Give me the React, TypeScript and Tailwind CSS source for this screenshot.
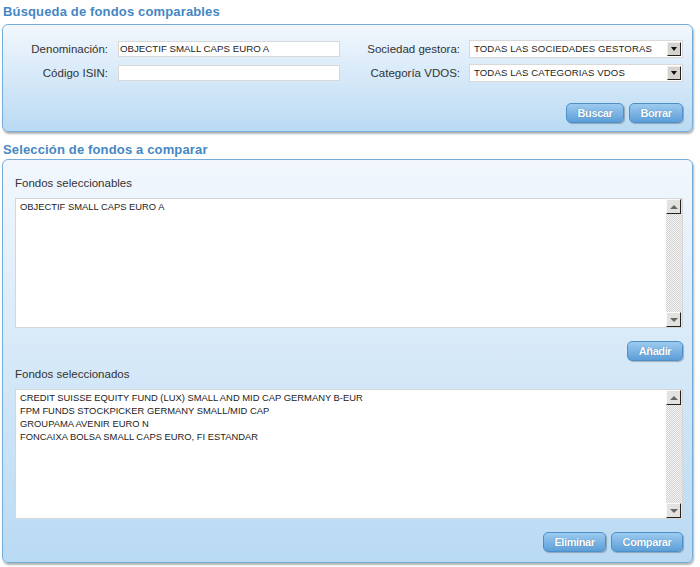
import React from "react";

const font = { fontFamily: '"Liberation Sans", Arial, sans-serif' };

const Btn = ({ label, w }: { label: string; w: string }) => (
  <button
    className={`${w} h-[20px] rounded-[5px] border border-[#4f8fc8] bg-gradient-to-b from-[#9ccbef] to-[#5c9ed8] text-[11px] leading-[18px] font-bold tracking-[-0.4px] text-white shadow-[1px_1px_1px_rgba(0,0,0,0.25)] [text-shadow:0_0_1px_#2d6aa3]`}
  >
    {label}
  </button>
);

const SelectBox = ({ value }: { value: string }) => (
  <div className="flex h-[18px] w-[214px] items-center justify-between border border-[#d8d8d8] bg-white pl-[4px] pr-[1px]">
    <span className="text-[9.6px] tracking-[0.1px] text-[#222]">{value}</span>
    <span className="flex h-[14px] w-[14px] items-center justify-center border border-b-[#222] border-r-[#222] border-t-[#eee] border-l-[#eee] bg-[#d6d3ce]">
      <span className="h-0 w-0 border-l-[3px] border-r-[3px] border-t-[4px] border-l-transparent border-r-transparent border-t-[#111]" />
    </span>
  </div>
);

const ScrollBtn = ({ up }: { up?: boolean }) => (
  <span className="flex h-[15px] w-[15px] items-center justify-center border border-b-[#222] border-r-[#222] border-t-[#fafafa] border-l-[#fafafa] bg-[#e4e2de]">
    {up ? (
      <span className="h-0 w-0 border-b-[4px] border-l-[4px] border-r-[4px] border-b-[#666] border-l-transparent border-r-transparent" />
    ) : (
      <span className="h-0 w-0 border-t-[4px] border-l-[4px] border-r-[4px] border-t-[#666] border-l-transparent border-r-transparent" />
    )}
  </span>
);

const ListBox = ({ items }: { items: string[] }) => (
  <div className="flex h-[130px] border border-[#d6d6d6] bg-white">
    <div className="flex-1 px-[4px] pt-[1px] text-[9.4px] leading-[13px] text-[#222]">
      {items.map((i) => (
        <div key={i}>{i}</div>
      ))}
    </div>
    <div className="flex w-[16px] flex-col bg-[repeating-conic-gradient(#d4d4d4_0%_25%,#f4f4f4_0%_50%)] bg-[length:2px_2px]">
      <ScrollBtn up />
      <div className="flex-1" />
      <ScrollBtn />
    </div>
  </div>
);

const Panel = ({ children, className }: { children: React.ReactNode; className?: string }) => (
  <div
    className={`rounded-[6px] border border-[#78acd8] bg-gradient-to-b from-[#f2f7fd] to-[#b9daf3] shadow-[1px_2px_2px_rgba(0,0,0,0.3)] ${className ?? ""}`}
  >
    {children}
  </div>
);

const Title = ({ text }: { text: string }) => (
  <div className="pl-[1px] text-[13px] leading-[16px] font-bold tracking-[0.15px] text-[#4587c3]">{text}</div>
);

export default function App() {
  return (
    <div style={font} className="h-[567px] w-[700px] bg-white pl-[2px] pr-[7px] pt-[4px]">
      <Title text="Búsqueda de fondos comparables" />
      <Panel className="mt-[4px] h-[108px] pt-[15px]">
        <div className="flex flex-col gap-[6px] text-[11.5px] leading-[16px] text-[#333]">
          <div className="flex h-[18px] items-center">
            <span className="w-[105px] text-right">Denominación:</span>
            <div className="ml-[10px] flex h-[16px] w-[222px] items-center border border-[#d8d8d8] bg-white pl-[1px] text-[9.7px] text-[#222]">
              OBJECTIF SMALL CAPS EURO A
            </div>
            <span className="w-[120px] text-right">Sociedad gestora:</span>
            <div className="ml-[9px]">
              <SelectBox value="TODAS LAS SOCIEDADES GESTORAS" />
            </div>
          </div>
          <div className="flex h-[18px] items-center">
            <span className="w-[105px] text-right">Código ISIN:</span>
            <div className="ml-[10px] h-[16px] w-[222px] border border-[#d8d8d8] bg-white" />
            <span className="w-[120px] text-right">Categoría VDOS:</span>
            <div className="ml-[9px]">
              <SelectBox value="TODAS LAS CATEGORIAS VDOS" />
            </div>
          </div>
        </div>
        <div className="mr-[9px] mt-[21px] flex justify-end gap-[5px]">
          <Btn label="Buscar" w="w-[58px]" />
          <Btn label="Borrar" w="w-[54px]" />
        </div>
      </Panel>

      <div className="mt-[10px]">
        <Title text="Selección de fondos a comparar" />
      </div>
      <Panel className="mt-[1px] h-[404px] pl-[12px] pr-[9px] pt-[15px]">
        <div className="mb-[7px] text-[11.5px] leading-[16px] text-[#333]">Fondos seleccionables</div>
        <ListBox items={["OBJECTIF SMALL CAPS EURO A"]} />
        <div className="mt-[13px] flex justify-end">
          <Btn label="Añadir" w="w-[56px]" />
        </div>
        <div className="mb-[7px] mt-[5px] text-[11.5px] leading-[16px] text-[#333]">Fondos seleccionados</div>
        <ListBox
          items={[
            "CREDIT SUISSE EQUITY FUND (LUX) SMALL AND MID CAP GERMANY B-EUR",
            "FPM FUNDS STOCKPICKER GERMANY SMALL/MID CAP",
            "GROUPAMA AVENIR EURO N",
            "FONCAIXA BOLSA SMALL CAPS EURO, FI ESTANDAR",
          ]}
        />
        <div className="mt-[13px] flex justify-end gap-[5px]">
          <Btn label="Eliminar" w="w-[63px]" />
          <Btn label="Comparar" w="w-[72px]" />
        </div>
      </Panel>
    </div>
  );
}
